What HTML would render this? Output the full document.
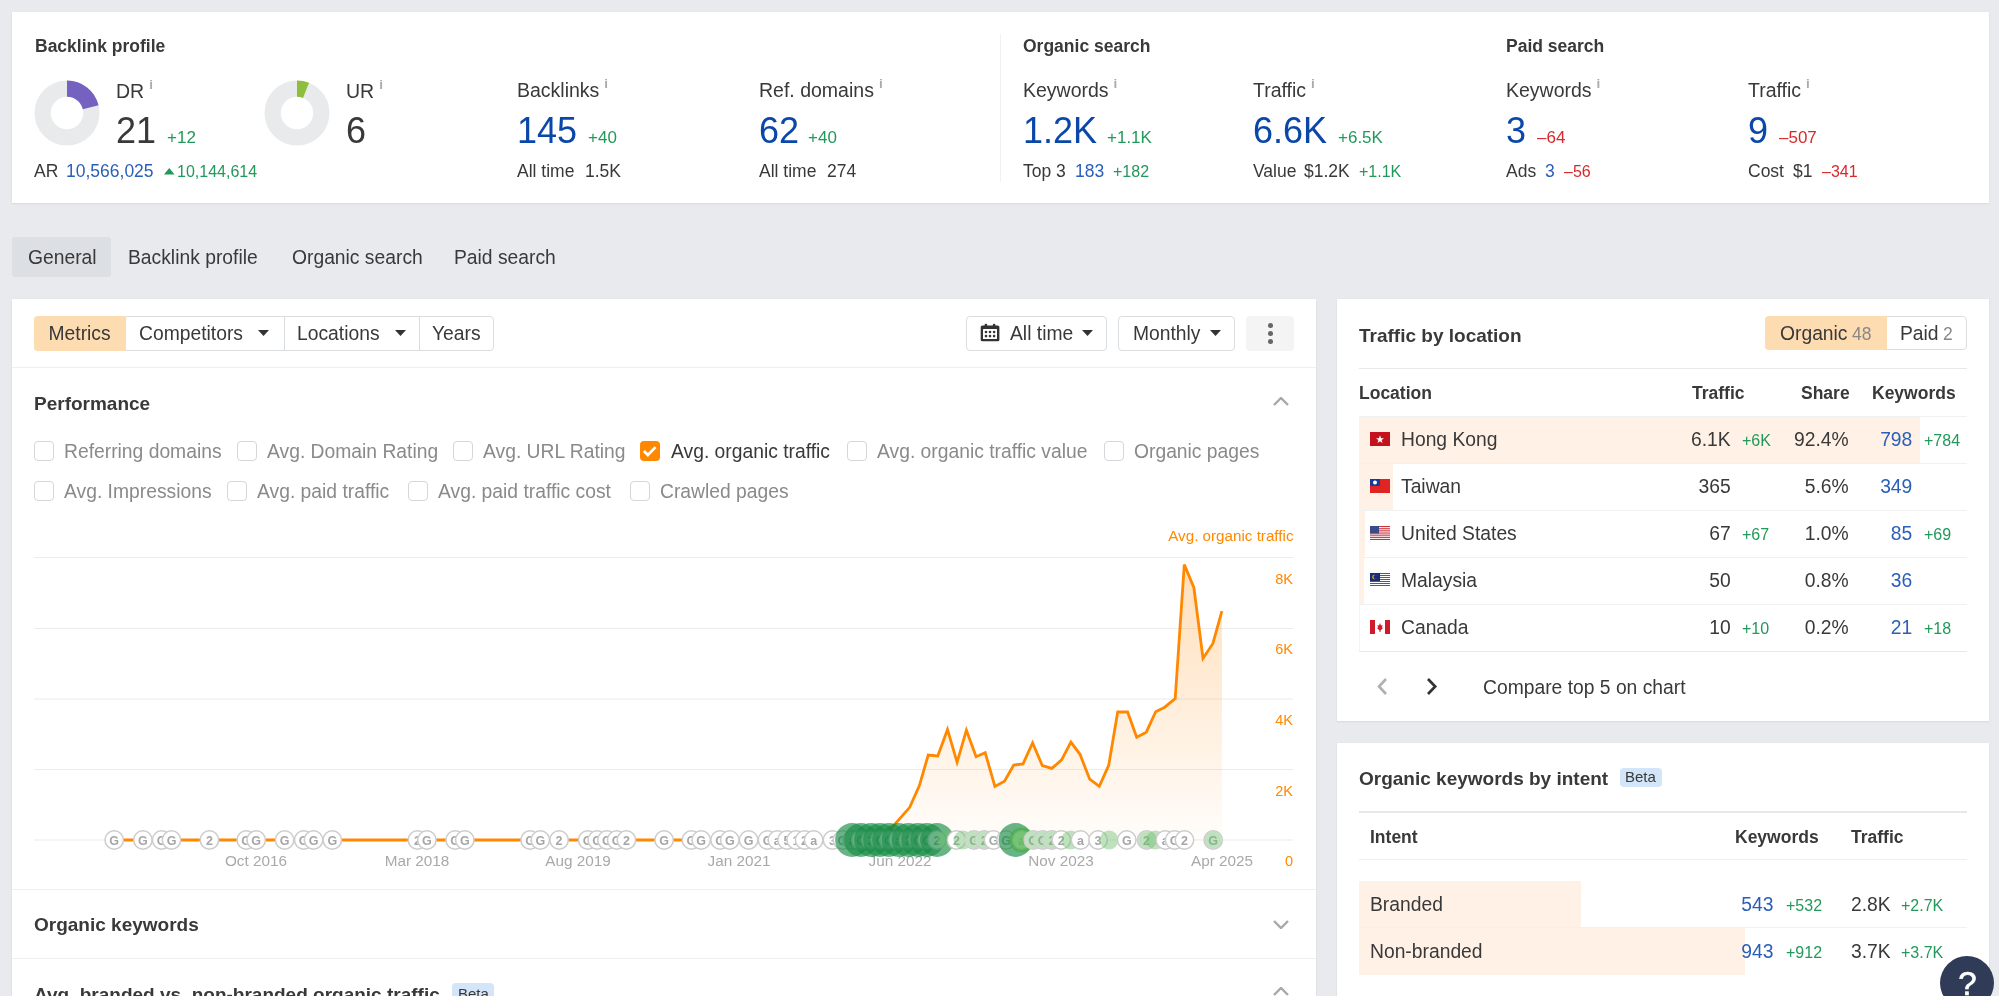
<!DOCTYPE html>
<html><head><meta charset="utf-8"><style>
html,body{margin:0;padding:0;}
body{width:1999px;height:996px;overflow:hidden;background:#e9eaed;position:relative;font-family:"Liberation Sans",sans-serif;}
.t{position:absolute;white-space:nowrap;line-height:normal;}
#w{position:absolute;left:0;top:0;width:1999px;height:996px;will-change:transform;}
</style></head><body><div id="w">
<div style="position:absolute;left:12px;top:12px;width:1977px;height:191px;background:#fff;box-shadow:0 1px 2px rgba(0,0,0,0.07),0 0 1px rgba(0,0,0,0.08);"></div>
<div style="position:absolute;left:1000px;top:34px;width:1px;height:148px;background:#f0f1f3;"></div>
<div class="t" style="left:35px;top:35.7px;font-size:17.5px;color:#393939;font-weight:bold;">Backlink profile</div>
<svg style="position:absolute;left:32.7px;top:79.2px" width="68" height="68" viewBox="32.7 79.2 68 68"><circle cx="66.7" cy="113.2" r="24.35" fill="none" stroke="#e9eaec" stroke-width="16.3"/><circle cx="66.7" cy="113.2" r="24.35" fill="none" stroke="#7461c0" stroke-width="16.3" stroke-dasharray="32.12906806826281 152.99556222982292" transform="rotate(-90 66.7 113.2)"/></svg>
<div class="t" style="left:116px;top:79.5px;font-size:19.5px;color:#393939;">DR</div>
<div class="t" style="left:149.1653125px;top:76.5px;font-size:13.5px;color:#ababab;font-weight:bold;">i</div>
<div class="t" style="left:116px;top:110px;font-size:36px;color:#393939;">21</div>
<div class="t" style="left:167px;top:128px;font-size:17px;color:#22985a;">+12</div>
<div class="t" style="left:34px;top:161px;font-size:17.5px;color:#393939;">AR</div>
<div class="t" style="left:66px;top:161px;font-size:17.5px;color:#2a5fb8;">10,566,025</div>
<svg style="position:absolute;left:163.5px;top:167.5px" width="11" height="7"><path d="M0 6.4 L5.25 0 L10.5 6.4Z" fill="#22985a"/></svg>
<div class="t" style="left:177px;top:163px;font-size:16px;color:#22985a;">10,144,614</div>
<svg style="position:absolute;left:263px;top:79.2px" width="68" height="68" viewBox="263 79.2 68 68"><circle cx="297" cy="113.2" r="24.35" fill="none" stroke="#e9eaec" stroke-width="16.3"/><circle cx="297" cy="113.2" r="24.35" fill="none" stroke="#8fbf3a" stroke-width="16.3" stroke-dasharray="9.179733733789375 152.99556222982292" transform="rotate(-90 297 113.2)"/></svg>
<div class="t" style="left:346px;top:79.5px;font-size:19.5px;color:#393939;">UR</div>
<div class="t" style="left:379.1653125px;top:76.5px;font-size:13.5px;color:#ababab;font-weight:bold;">i</div>
<div class="t" style="left:346px;top:110px;font-size:36px;color:#393939;">6</div>
<div class="t" style="left:517px;top:79.3px;font-size:19.5px;color:#393939;">Backlinks</div>
<div class="t" style="left:604.363125px;top:76.3px;font-size:13.5px;color:#ababab;font-weight:bold;">i</div>
<div class="t" style="left:517px;top:109.5px;font-size:36px;color:#0b47a8;">145</div>
<div class="t" style="left:588px;top:127.5px;font-size:17px;color:#22985a;">+40</div>
<div class="t" style="left:517px;top:161px;font-size:17.5px;color:#393939;">All time</div>
<div class="t" style="left:585px;top:161px;font-size:17.5px;color:#393939;">1.5K</div>
<div class="t" style="left:759px;top:79.3px;font-size:19.5px;color:#393939;">Ref. domains</div>
<div class="t" style="left:878.888515625px;top:76.3px;font-size:13.5px;color:#ababab;font-weight:bold;">i</div>
<div class="t" style="left:759px;top:109.5px;font-size:36px;color:#0b47a8;">62</div>
<div class="t" style="left:808px;top:127.5px;font-size:17px;color:#22985a;">+40</div>
<div class="t" style="left:759px;top:161px;font-size:17.5px;color:#393939;">All time</div>
<div class="t" style="left:827px;top:161px;font-size:17.5px;color:#393939;">274</div>
<div class="t" style="left:1023px;top:35.9px;font-size:17.5px;color:#393939;font-weight:bold;">Organic search</div>
<div class="t" style="left:1023px;top:79.3px;font-size:19.5px;color:#393939;">Keywords</div>
<div class="t" style="left:1113.620234375px;top:76.3px;font-size:13.5px;color:#ababab;font-weight:bold;">i</div>
<div class="t" style="left:1023px;top:109.5px;font-size:36px;color:#0b47a8;">1.2K</div>
<div class="t" style="left:1107px;top:127.5px;font-size:17px;color:#22985a;">+1.1K</div>
<div class="t" style="left:1023px;top:161px;font-size:17.5px;color:#393939;">Top 3</div>
<div class="t" style="left:1075px;top:161px;font-size:17.5px;color:#2a5fb8;">183</div>
<div class="t" style="left:1113px;top:163px;font-size:16px;color:#22985a;">+182</div>
<div class="t" style="left:1253px;top:79.3px;font-size:19.5px;color:#393939;">Traffic</div>
<div class="t" style="left:1311.0933203125px;top:76.3px;font-size:13.5px;color:#ababab;font-weight:bold;">i</div>
<div class="t" style="left:1253px;top:109.5px;font-size:36px;color:#0b47a8;">6.6K</div>
<div class="t" style="left:1338px;top:127.5px;font-size:17px;color:#22985a;">+6.5K</div>
<div class="t" style="left:1253px;top:161px;font-size:17.5px;color:#393939;">Value</div>
<div class="t" style="left:1304px;top:161px;font-size:17.5px;color:#393939;">$1.2K</div>
<div class="t" style="left:1359px;top:163px;font-size:16px;color:#22985a;">+1.1K</div>
<div class="t" style="left:1506px;top:35.9px;font-size:17.5px;color:#393939;font-weight:bold;">Paid search</div>
<div class="t" style="left:1506px;top:79.3px;font-size:19.5px;color:#393939;">Keywords</div>
<div class="t" style="left:1596.620234375px;top:76.3px;font-size:13.5px;color:#ababab;font-weight:bold;">i</div>
<div class="t" style="left:1506px;top:109.5px;font-size:36px;color:#0b47a8;">3</div>
<div class="t" style="left:1537px;top:127.5px;font-size:17px;color:#d8282c;">–64</div>
<div class="t" style="left:1506px;top:161px;font-size:17.5px;color:#393939;">Ads</div>
<div class="t" style="left:1545px;top:161px;font-size:17.5px;color:#2a5fb8;">3</div>
<div class="t" style="left:1564px;top:163px;font-size:16px;color:#d8282c;">–56</div>
<div class="t" style="left:1748px;top:79.3px;font-size:19.5px;color:#393939;">Traffic</div>
<div class="t" style="left:1806.0933203125px;top:76.3px;font-size:13.5px;color:#ababab;font-weight:bold;">i</div>
<div class="t" style="left:1748px;top:109.5px;font-size:36px;color:#0b47a8;">9</div>
<div class="t" style="left:1779px;top:127.5px;font-size:17px;color:#d8282c;">–507</div>
<div class="t" style="left:1748px;top:161px;font-size:17.5px;color:#393939;">Cost</div>
<div class="t" style="left:1793px;top:161px;font-size:17.5px;color:#393939;">$1</div>
<div class="t" style="left:1822px;top:163px;font-size:16px;color:#d8282c;">–341</div>
<div style="position:absolute;left:12px;top:237px;width:99px;height:40px;background:#dcdfe3;border-radius:3px;"></div>
<div class="t" style="left:28px;top:247px;font-size:19.3px;color:#393939;">General</div>
<div class="t" style="left:128px;top:247px;font-size:19.3px;color:#393939;">Backlink profile</div>
<div class="t" style="left:292px;top:247px;font-size:19.3px;color:#393939;">Organic search</div>
<div class="t" style="left:454px;top:247px;font-size:19.3px;color:#393939;">Paid search</div>
<div style="position:absolute;left:12px;top:299px;width:1304px;height:700px;background:#fff;box-shadow:0 1px 2px rgba(0,0,0,0.07),0 0 1px rgba(0,0,0,0.08);"></div>
<div style="position:absolute;left:34px;top:316px;width:460px;height:35px;box-sizing:border-box;border:1px solid #dadde0;border-radius:4px;"></div>
<div style="position:absolute;left:34px;top:316px;width:92px;height:35px;background:#fedcb2;border-radius:4px 0 0 4px;"></div>
<div style="position:absolute;left:283.5px;top:316px;width:1px;height:35px;background:#dadde0;"></div>
<div style="position:absolute;left:419px;top:316px;width:1px;height:35px;background:#dadde0;"></div>
<div class="t" style="left:48.5px;top:323px;font-size:19.3px;color:#393939;">Metrics</div>
<div class="t" style="left:139px;top:323px;font-size:19.3px;color:#393939;">Competitors</div>
<svg style="position:absolute;left:258px;top:330px" width="11" height="6"><path d="M0 0 L11 0 L5.5 6Z" fill="#333"/></svg>
<div class="t" style="left:297px;top:323px;font-size:19.3px;color:#393939;">Locations</div>
<svg style="position:absolute;left:394.5px;top:330px" width="11" height="6"><path d="M0 0 L11 0 L5.5 6Z" fill="#333"/></svg>
<div class="t" style="left:432px;top:323px;font-size:19.3px;color:#393939;">Years</div>
<div style="position:absolute;left:966px;top:316px;width:141px;height:35px;box-sizing:border-box;border:1px solid #dadde0;border-radius:4px;"></div>
<svg style="position:absolute;left:980px;top:323px" width="20" height="20" viewBox="0 0 20 20"><rect x="0.7" y="2.4" width="18.7" height="15.9" rx="1.6" fill="#333"/><rect x="4.6" y="0.8" width="2.6" height="3.5" rx="1.2" fill="#333"/><rect x="12.8" y="0.8" width="2.6" height="3.5" rx="1.2" fill="#333"/><rect x="3" y="6.1" width="14" height="10" rx="0.5" fill="#fff"/><g fill="#333"><circle cx="6" cy="9" r="1.3"/><circle cx="10" cy="9" r="1.3"/><circle cx="14.1" cy="9" r="1.3"/><circle cx="6" cy="13.1" r="1.3"/><circle cx="10" cy="13.1" r="1.3"/><circle cx="14.1" cy="13.1" r="1.3"/></g></svg>
<div class="t" style="left:1010px;top:323px;font-size:19.3px;color:#393939;">All time</div>
<svg style="position:absolute;left:1082px;top:330px" width="11" height="6"><path d="M0 0 L11 0 L5.5 6Z" fill="#333"/></svg>
<div style="position:absolute;left:1118px;top:316px;width:117px;height:35px;box-sizing:border-box;border:1px solid #dadde0;border-radius:4px;"></div>
<div class="t" style="left:1133px;top:323px;font-size:19.3px;color:#393939;">Monthly</div>
<svg style="position:absolute;left:1209.5px;top:330px" width="11" height="6"><path d="M0 0 L11 0 L5.5 6Z" fill="#333"/></svg>
<div style="position:absolute;left:1246px;top:316px;width:48px;height:35px;background:#f4f4f5;border-radius:4px;"></div>
<div style="position:absolute;left:1267.5px;top:322.5px;width:5px;height:5px;background:#666;border-radius:50%;"></div>
<div style="position:absolute;left:1267.5px;top:330.5px;width:5px;height:5px;background:#666;border-radius:50%;"></div>
<div style="position:absolute;left:1267.5px;top:338.5px;width:5px;height:5px;background:#666;border-radius:50%;"></div>
<div style="position:absolute;left:12px;top:367px;width:1304px;height:1px;background:#eceef0;"></div>
<div class="t" style="left:34px;top:393.3px;font-size:19px;color:#393939;font-weight:bold;">Performance</div>
<svg style="position:absolute;left:1273.3px;top:396.7px" width="16" height="9"><path d="M1 8 L8 1 L15 8" fill="none" stroke="#a8a8a8" stroke-width="2.4"/></svg>
<div style="position:absolute;left:34px;top:441px;width:20px;height:20px;box-sizing:border-box;border:1px solid #d4d6d9;border-radius:4px;"></div>
<div class="t" style="left:64px;top:441px;font-size:19.3px;color:#8a8a8a;">Referring domains</div>
<div style="position:absolute;left:237px;top:441px;width:20px;height:20px;box-sizing:border-box;border:1px solid #d4d6d9;border-radius:4px;"></div>
<div class="t" style="left:267px;top:441px;font-size:19.3px;color:#8a8a8a;">Avg. Domain Rating</div>
<div style="position:absolute;left:453px;top:441px;width:20px;height:20px;box-sizing:border-box;border:1px solid #d4d6d9;border-radius:4px;"></div>
<div class="t" style="left:483px;top:441px;font-size:19.3px;color:#8a8a8a;">Avg. URL Rating</div>
<svg style="position:absolute;left:640px;top:441px" width="20" height="20"><rect x="0" y="0" width="20" height="20" rx="4" fill="#ff8800"/><path d="M3.9 10 L7.9 14 L15.6 6.1" fill="none" stroke="#fff" stroke-width="2.7"/></svg>
<div class="t" style="left:671px;top:441px;font-size:19.3px;color:#393939;">Avg. organic traffic</div>
<div style="position:absolute;left:847px;top:441px;width:20px;height:20px;box-sizing:border-box;border:1px solid #d4d6d9;border-radius:4px;"></div>
<div class="t" style="left:877px;top:441px;font-size:19.3px;color:#8a8a8a;">Avg. organic traffic value</div>
<div style="position:absolute;left:1104px;top:441px;width:20px;height:20px;box-sizing:border-box;border:1px solid #d4d6d9;border-radius:4px;"></div>
<div class="t" style="left:1134px;top:441px;font-size:19.3px;color:#8a8a8a;">Organic pages</div>
<div style="position:absolute;left:34px;top:480.5px;width:20px;height:20px;box-sizing:border-box;border:1px solid #d4d6d9;border-radius:4px;"></div>
<div class="t" style="left:64px;top:480.5px;font-size:19.3px;color:#8a8a8a;">Avg. Impressions</div>
<div style="position:absolute;left:227px;top:480.5px;width:20px;height:20px;box-sizing:border-box;border:1px solid #d4d6d9;border-radius:4px;"></div>
<div class="t" style="left:257px;top:480.5px;font-size:19.3px;color:#8a8a8a;">Avg. paid traffic</div>
<div style="position:absolute;left:408px;top:480.5px;width:20px;height:20px;box-sizing:border-box;border:1px solid #d4d6d9;border-radius:4px;"></div>
<div class="t" style="left:438px;top:480.5px;font-size:19.3px;color:#8a8a8a;">Avg. paid traffic cost</div>
<div style="position:absolute;left:630px;top:480.5px;width:20px;height:20px;box-sizing:border-box;border:1px solid #d4d6d9;border-radius:4px;"></div>
<div class="t" style="left:660px;top:480.5px;font-size:19.3px;color:#8a8a8a;">Crawled pages</div>
<svg style="position:absolute;left:0;top:0" width="1999" height="996" viewBox="0 0 1999 996">
<defs><linearGradient id="fg" x1="0" y1="0" x2="0" y2="1"><stop offset="0" stop-color="#ff8800" stop-opacity="0.27"/><stop offset="1" stop-color="#ff8800" stop-opacity="0.02"/></linearGradient></defs>
<line x1="34" y1="557.5" x2="1293" y2="557.5" stroke="#ececec" stroke-width="1.2"/>
<line x1="34" y1="628.5" x2="1293" y2="628.5" stroke="#ececec" stroke-width="1.2"/>
<line x1="34" y1="699" x2="1293" y2="699" stroke="#ececec" stroke-width="1.2"/>
<line x1="34" y1="769.5" x2="1293" y2="769.5" stroke="#ececec" stroke-width="1.2"/>
<line x1="34" y1="840" x2="1293" y2="840" stroke="#ececec" stroke-width="1.2"/>
<path d="M881,840 L881,840 L909.7,807.3 L919.4,785.6 L928.2,755.1 L937.8,755.9 L947.5,729.4 L957.1,762.3 L966.4,730.2 L976.1,756.7 L985.2,752.7 L994.9,786.4 L1004.5,781.3 L1013.7,765 L1023,763.9 L1032.6,743 L1042.3,765.5 L1051.9,768.4 L1061.6,759.9 L1070.9,742.2 L1080,754.3 L1089.7,779.2 L1099.3,786.4 L1108.7,765.4 L1117.7,712 L1127.6,712 L1136.7,737.3 L1146.3,732.2 L1155.7,711.7 L1164.7,707.2 L1175.2,698.5 L1184.3,564.5 L1193.9,587.7 L1203,658.4 L1212.9,643.4 L1221.9,611.1 L1222,840 Z" fill="url(#fg)"/>
<polyline points="114,840 881,840 909.7,807.3 919.4,785.6 928.2,755.1 937.8,755.9 947.5,729.4 957.1,762.3 966.4,730.2 976.1,756.7 985.2,752.7 994.9,786.4 1004.5,781.3 1013.7,765 1023,763.9 1032.6,743 1042.3,765.5 1051.9,768.4 1061.6,759.9 1070.9,742.2 1080,754.3 1089.7,779.2 1099.3,786.4 1108.7,765.4 1117.7,712 1127.6,712 1136.7,737.3 1146.3,732.2 1155.7,711.7 1164.7,707.2 1175.2,698.5 1184.3,564.5 1193.9,587.7 1203,658.4 1212.9,643.4 1221.9,611.1" fill="none" stroke="#ff8800" stroke-width="2.8" stroke-linejoin="miter"/>
</svg>
<svg style="position:absolute;left:0;top:0" width="1999" height="996" viewBox="0 0 1999 996" font-family="Liberation Sans, sans-serif">
<text x="256" y="866" font-size="15.3" text-anchor="middle" fill="#a9a9a9">Oct 2016</text>
<text x="417" y="866" font-size="15.3" text-anchor="middle" fill="#a9a9a9">Mar 2018</text>
<text x="578" y="866" font-size="15.3" text-anchor="middle" fill="#a9a9a9">Aug 2019</text>
<text x="739" y="866" font-size="15.3" text-anchor="middle" fill="#a9a9a9">Jan 2021</text>
<text x="900" y="866" font-size="15.3" text-anchor="middle" fill="#a9a9a9">Jun 2022</text>
<text x="1061" y="866" font-size="15.3" text-anchor="middle" fill="#a9a9a9">Nov 2023</text>
<text x="1222" y="866" font-size="15.3" text-anchor="middle" fill="#a9a9a9">Apr 2025</text>
<circle cx="114.2" cy="840" r="9.2" fill="#fff" stroke="#cccccc" stroke-width="1.5"/><text x="114.2" y="844.5" font-size="12.5" font-weight="bold" text-anchor="middle" fill="#a6a6a6">G</text>
<circle cx="142.9" cy="840" r="9.2" fill="#fff" stroke="#cccccc" stroke-width="1.5"/><text x="142.9" y="844.5" font-size="12.5" font-weight="bold" text-anchor="middle" fill="#a6a6a6">G</text>
<circle cx="161.6" cy="840" r="9.2" fill="#fff" stroke="#cccccc" stroke-width="1.5"/><text x="161.6" y="844.5" font-size="12.5" font-weight="bold" text-anchor="middle" fill="#a6a6a6">G</text>
<circle cx="171.5" cy="840" r="9.2" fill="#fff" stroke="#cccccc" stroke-width="1.5"/><text x="171.5" y="844.5" font-size="12.5" font-weight="bold" text-anchor="middle" fill="#a6a6a6">G</text>
<circle cx="209.4" cy="840" r="9.2" fill="#fff" stroke="#cccccc" stroke-width="1.5"/><text x="209.4" y="844.5" font-size="12.5" font-weight="bold" text-anchor="middle" fill="#a6a6a6">2</text>
<circle cx="246.2" cy="840" r="9.2" fill="#fff" stroke="#cccccc" stroke-width="1.5"/><text x="246.2" y="844.5" font-size="12.5" font-weight="bold" text-anchor="middle" fill="#a6a6a6">G</text>
<circle cx="256.2" cy="840" r="9.2" fill="#fff" stroke="#cccccc" stroke-width="1.5"/><text x="256.2" y="844.5" font-size="12.5" font-weight="bold" text-anchor="middle" fill="#a6a6a6">G</text>
<circle cx="284.6" cy="840" r="9.2" fill="#fff" stroke="#cccccc" stroke-width="1.5"/><text x="284.6" y="844.5" font-size="12.5" font-weight="bold" text-anchor="middle" fill="#a6a6a6">G</text>
<circle cx="303.7" cy="840" r="9.2" fill="#fff" stroke="#cccccc" stroke-width="1.5"/><text x="303.7" y="844.5" font-size="12.5" font-weight="bold" text-anchor="middle" fill="#a6a6a6">G</text>
<circle cx="313.5" cy="840" r="9.2" fill="#fff" stroke="#cccccc" stroke-width="1.5"/><text x="313.5" y="844.5" font-size="12.5" font-weight="bold" text-anchor="middle" fill="#a6a6a6">G</text>
<circle cx="332.3" cy="840" r="9.2" fill="#fff" stroke="#cccccc" stroke-width="1.5"/><text x="332.3" y="844.5" font-size="12.5" font-weight="bold" text-anchor="middle" fill="#a6a6a6">G</text>
<circle cx="417.4" cy="840" r="9.2" fill="#fff" stroke="#cccccc" stroke-width="1.5"/><text x="417.4" y="844.5" font-size="12.5" font-weight="bold" text-anchor="middle" fill="#a6a6a6">2</text>
<circle cx="426.9" cy="840" r="9.2" fill="#fff" stroke="#cccccc" stroke-width="1.5"/><text x="426.9" y="844.5" font-size="12.5" font-weight="bold" text-anchor="middle" fill="#a6a6a6">G</text>
<circle cx="455.1" cy="840" r="9.2" fill="#fff" stroke="#cccccc" stroke-width="1.5"/><text x="455.1" y="844.5" font-size="12.5" font-weight="bold" text-anchor="middle" fill="#a6a6a6">G</text>
<circle cx="464.8" cy="840" r="9.2" fill="#fff" stroke="#cccccc" stroke-width="1.5"/><text x="464.8" y="844.5" font-size="12.5" font-weight="bold" text-anchor="middle" fill="#a6a6a6">G</text>
<circle cx="530.1" cy="840" r="9.2" fill="#fff" stroke="#cccccc" stroke-width="1.5"/><text x="530.1" y="844.5" font-size="12.5" font-weight="bold" text-anchor="middle" fill="#a6a6a6">G</text>
<circle cx="540.3" cy="840" r="9.2" fill="#fff" stroke="#cccccc" stroke-width="1.5"/><text x="540.3" y="844.5" font-size="12.5" font-weight="bold" text-anchor="middle" fill="#a6a6a6">G</text>
<circle cx="559.1" cy="840" r="9.2" fill="#fff" stroke="#cccccc" stroke-width="1.5"/><text x="559.1" y="844.5" font-size="12.5" font-weight="bold" text-anchor="middle" fill="#a6a6a6">2</text>
<circle cx="587.7" cy="840" r="9.2" fill="#fff" stroke="#cccccc" stroke-width="1.5"/><text x="587.7" y="844.5" font-size="12.5" font-weight="bold" text-anchor="middle" fill="#a6a6a6">G</text>
<circle cx="597.2" cy="840" r="9.2" fill="#fff" stroke="#cccccc" stroke-width="1.5"/><text x="597.2" y="844.5" font-size="12.5" font-weight="bold" text-anchor="middle" fill="#a6a6a6">G</text>
<circle cx="606.9" cy="840" r="9.2" fill="#fff" stroke="#cccccc" stroke-width="1.5"/><text x="606.9" y="844.5" font-size="12.5" font-weight="bold" text-anchor="middle" fill="#a6a6a6">G</text>
<circle cx="616.7" cy="840" r="9.2" fill="#fff" stroke="#cccccc" stroke-width="1.5"/><text x="616.7" y="844.5" font-size="12.5" font-weight="bold" text-anchor="middle" fill="#a6a6a6">G</text>
<circle cx="626.4" cy="840" r="9.2" fill="#fff" stroke="#cccccc" stroke-width="1.5"/><text x="626.4" y="844.5" font-size="12.5" font-weight="bold" text-anchor="middle" fill="#a6a6a6">2</text>
<circle cx="664.1" cy="840" r="9.2" fill="#fff" stroke="#cccccc" stroke-width="1.5"/><text x="664.1" y="844.5" font-size="12.5" font-weight="bold" text-anchor="middle" fill="#a6a6a6">G</text>
<circle cx="691.4" cy="840" r="9.2" fill="#fff" stroke="#cccccc" stroke-width="1.5"/><text x="691.4" y="844.5" font-size="12.5" font-weight="bold" text-anchor="middle" fill="#a6a6a6">G</text>
<circle cx="701.2" cy="840" r="9.2" fill="#fff" stroke="#cccccc" stroke-width="1.5"/><text x="701.2" y="844.5" font-size="12.5" font-weight="bold" text-anchor="middle" fill="#a6a6a6">G</text>
<circle cx="720" cy="840" r="9.2" fill="#fff" stroke="#cccccc" stroke-width="1.5"/><text x="720" y="844.5" font-size="12.5" font-weight="bold" text-anchor="middle" fill="#a6a6a6">G</text>
<circle cx="729.8" cy="840" r="9.2" fill="#fff" stroke="#cccccc" stroke-width="1.5"/><text x="729.8" y="844.5" font-size="12.5" font-weight="bold" text-anchor="middle" fill="#a6a6a6">G</text>
<circle cx="748.6" cy="840" r="9.2" fill="#fff" stroke="#cccccc" stroke-width="1.5"/><text x="748.6" y="844.5" font-size="12.5" font-weight="bold" text-anchor="middle" fill="#a6a6a6">G</text>
<circle cx="767.5" cy="840" r="9.2" fill="#fff" stroke="#cccccc" stroke-width="1.5"/><text x="767.5" y="844.5" font-size="12.5" font-weight="bold" text-anchor="middle" fill="#a6a6a6">G</text>
<circle cx="777.3" cy="840" r="9.2" fill="#fff" stroke="#cccccc" stroke-width="1.5"/><text x="777.3" y="844.5" font-size="12.5" font-weight="bold" text-anchor="middle" fill="#a6a6a6">a</text>
<circle cx="787" cy="840" r="9.2" fill="#fff" stroke="#cccccc" stroke-width="1.5"/><text x="787" y="844.5" font-size="12.5" font-weight="bold" text-anchor="middle" fill="#a6a6a6">5</text>
<circle cx="796.1" cy="840" r="9.2" fill="#fff" stroke="#cccccc" stroke-width="1.5"/><text x="796.1" y="844.5" font-size="12.5" font-weight="bold" text-anchor="middle" fill="#a6a6a6">1</text>
<circle cx="804.6" cy="840" r="9.2" fill="#fff" stroke="#cccccc" stroke-width="1.5"/><text x="804.6" y="844.5" font-size="12.5" font-weight="bold" text-anchor="middle" fill="#a6a6a6">2</text>
<circle cx="813.7" cy="840" r="9.2" fill="#fff" stroke="#cccccc" stroke-width="1.5"/><text x="813.7" y="844.5" font-size="12.5" font-weight="bold" text-anchor="middle" fill="#a6a6a6">a</text>
<circle cx="832.5" cy="840" r="9.2" fill="#fff" stroke="#cccccc" stroke-width="1.5"/><text x="832.5" y="844.5" font-size="12.5" font-weight="bold" text-anchor="middle" fill="#a6a6a6">3</text>
<circle cx="842.4" cy="840" r="9.2" fill="#fff" stroke="#cccccc" stroke-width="1.5"/><text x="842.4" y="844.5" font-size="12.5" font-weight="bold" text-anchor="middle" fill="#a6a6a6">G</text>
<circle cx="852" cy="840" r="9.2" fill="#fff" stroke="#cccccc" stroke-width="1.5"/><text x="852" y="844.5" font-size="12.5" font-weight="bold" text-anchor="middle" fill="#a6a6a6">a</text>
<circle cx="852" cy="840" r="16.9" fill="rgb(20,138,68)" fill-opacity="0.64"/>
<circle cx="861" cy="840" r="9.2" fill="#fff" stroke="#cccccc" stroke-width="1.5"/><text x="861" y="844.5" font-size="12.5" font-weight="bold" text-anchor="middle" fill="#a6a6a6">G</text>
<circle cx="861" cy="840" r="16.9" fill="rgb(20,138,68)" fill-opacity="0.64"/>
<circle cx="871" cy="840" r="9.2" fill="#fff" stroke="#cccccc" stroke-width="1.5"/><text x="871" y="844.5" font-size="12.5" font-weight="bold" text-anchor="middle" fill="#a6a6a6">2</text>
<circle cx="871" cy="840" r="16.9" fill="rgb(20,138,68)" fill-opacity="0.64"/>
<circle cx="880" cy="840" r="9.2" fill="#fff" stroke="#cccccc" stroke-width="1.5"/><text x="880" y="844.5" font-size="12.5" font-weight="bold" text-anchor="middle" fill="#a6a6a6">G</text>
<circle cx="880" cy="840" r="16.9" fill="rgb(20,138,68)" fill-opacity="0.64"/>
<circle cx="889" cy="840" r="9.2" fill="#fff" stroke="#cccccc" stroke-width="1.5"/><text x="889" y="844.5" font-size="12.5" font-weight="bold" text-anchor="middle" fill="#a6a6a6">G</text>
<circle cx="889" cy="840" r="16.9" fill="rgb(20,138,68)" fill-opacity="0.64"/>
<circle cx="898.5" cy="840" r="9.2" fill="#fff" stroke="#cccccc" stroke-width="1.5"/><text x="898.5" y="844.5" font-size="12.5" font-weight="bold" text-anchor="middle" fill="#a6a6a6">a</text>
<circle cx="898.5" cy="840" r="16.9" fill="rgb(20,138,68)" fill-opacity="0.64"/>
<circle cx="908.5" cy="840" r="9.2" fill="#fff" stroke="#cccccc" stroke-width="1.5"/><text x="908.5" y="844.5" font-size="12.5" font-weight="bold" text-anchor="middle" fill="#a6a6a6">2</text>
<circle cx="908.5" cy="840" r="16.9" fill="rgb(20,138,68)" fill-opacity="0.64"/>
<circle cx="918" cy="840" r="9.2" fill="#fff" stroke="#cccccc" stroke-width="1.5"/><text x="918" y="844.5" font-size="12.5" font-weight="bold" text-anchor="middle" fill="#a6a6a6">G</text>
<circle cx="918" cy="840" r="16.9" fill="rgb(20,138,68)" fill-opacity="0.64"/>
<circle cx="927" cy="840" r="9.2" fill="#fff" stroke="#cccccc" stroke-width="1.5"/><text x="927" y="844.5" font-size="12.5" font-weight="bold" text-anchor="middle" fill="#a6a6a6">G</text>
<circle cx="927" cy="840" r="16.9" fill="rgb(20,138,68)" fill-opacity="0.64"/>
<circle cx="937" cy="840" r="9.2" fill="#fff" stroke="#cccccc" stroke-width="1.5"/><text x="937" y="844.5" font-size="12.5" font-weight="bold" text-anchor="middle" fill="#a6a6a6">2</text>
<circle cx="937" cy="840" r="16.9" fill="rgb(20,138,68)" fill-opacity="0.64"/>
<circle cx="946.6" cy="840" r="9.4" fill="rgb(110,190,110)" fill-opacity="0.45"/>
<circle cx="956.5" cy="840" r="9.2" fill="#fff" stroke="#cccccc" stroke-width="1.5"/><text x="956.5" y="844.5" font-size="12.5" font-weight="bold" text-anchor="middle" fill="#a6a6a6">2</text>
<circle cx="963" cy="840" r="9.4" fill="rgb(110,190,110)" fill-opacity="0.45"/>
<circle cx="974" cy="840" r="9.2" fill="#fff" stroke="#cccccc" stroke-width="1.5"/><text x="974" y="844.5" font-size="12.5" font-weight="bold" text-anchor="middle" fill="#a6a6a6">G</text>
<circle cx="974" cy="840" r="8.4" fill="rgb(110,190,110)" fill-opacity="0.45"/>
<circle cx="984.3" cy="840" r="9.2" fill="#fff" stroke="#cccccc" stroke-width="1.5"/><text x="984.3" y="844.5" font-size="12.5" font-weight="bold" text-anchor="middle" fill="#a6a6a6">2</text>
<circle cx="984.3" cy="840" r="8.4" fill="rgb(110,190,110)" fill-opacity="0.45"/>
<circle cx="993.5" cy="840" r="9.2" fill="#fff" stroke="#cccccc" stroke-width="1.5"/><text x="993.5" y="844.5" font-size="12.5" font-weight="bold" text-anchor="middle" fill="#a6a6a6">G</text>
<circle cx="1006" cy="840" r="9.2" fill="#fff" stroke="#cccccc" stroke-width="1.5"/><text x="1006" y="844.5" font-size="12.5" font-weight="bold" text-anchor="middle" fill="#a6a6a6">G</text>
<circle cx="1015.5" cy="840" r="16.9" fill="rgb(20,138,68)" fill-opacity="0.64"/>
<circle cx="1021.8" cy="840" r="9.2" fill="#fff" stroke="#cccccc" stroke-width="1.5"/><text x="1021.8" y="844.5" font-size="12.5" font-weight="bold" text-anchor="middle" fill="#a6a6a6">a</text>
<circle cx="1021.8" cy="840" r="12.6" fill="rgb(70,175,70)" fill-opacity="0.7"/>
<circle cx="1021.8" cy="840" r="8.4" fill="rgb(110,190,110)" fill-opacity="0.45"/>
<circle cx="1033.2" cy="840" r="9.2" fill="#fff" stroke="#cccccc" stroke-width="1.5"/><text x="1033.2" y="844.5" font-size="12.5" font-weight="bold" text-anchor="middle" fill="#a6a6a6">G</text>
<circle cx="1033.2" cy="840" r="8.4" fill="rgb(110,190,110)" fill-opacity="0.45"/>
<circle cx="1042.6" cy="840" r="9.2" fill="#fff" stroke="#cccccc" stroke-width="1.5"/><text x="1042.6" y="844.5" font-size="12.5" font-weight="bold" text-anchor="middle" fill="#a6a6a6">G</text>
<circle cx="1042.6" cy="840" r="8.4" fill="rgb(110,190,110)" fill-opacity="0.45"/>
<circle cx="1051.9" cy="840" r="9.2" fill="#fff" stroke="#cccccc" stroke-width="1.5"/><text x="1051.9" y="844.5" font-size="12.5" font-weight="bold" text-anchor="middle" fill="#a6a6a6">2</text>
<circle cx="1051.9" cy="840" r="8.4" fill="rgb(110,190,110)" fill-opacity="0.45"/>
<circle cx="1061.3" cy="840" r="9.2" fill="#fff" stroke="#cccccc" stroke-width="1.5"/><text x="1061.3" y="844.5" font-size="12.5" font-weight="bold" text-anchor="middle" fill="#a6a6a6">2</text>
<circle cx="1070.6" cy="840" r="9.4" fill="rgb(110,190,110)" fill-opacity="0.45"/>
<circle cx="1080.5" cy="840" r="9.2" fill="#fff" stroke="#cccccc" stroke-width="1.5"/><text x="1080.5" y="844.5" font-size="12.5" font-weight="bold" text-anchor="middle" fill="#a6a6a6">a</text>
<circle cx="1098.1" cy="840" r="9.2" fill="#fff" stroke="#cccccc" stroke-width="1.5"/><text x="1098.1" y="844.5" font-size="12.5" font-weight="bold" text-anchor="middle" fill="#a6a6a6">3</text>
<circle cx="1109.1" cy="840" r="9.4" fill="rgb(110,190,110)" fill-opacity="0.45"/>
<circle cx="1126.8" cy="840" r="9.2" fill="#fff" stroke="#cccccc" stroke-width="1.5"/><text x="1126.8" y="844.5" font-size="12.5" font-weight="bold" text-anchor="middle" fill="#a6a6a6">G</text>
<circle cx="1146.6" cy="840" r="9.2" fill="#fff" stroke="#cccccc" stroke-width="1.5"/><text x="1146.6" y="844.5" font-size="12.5" font-weight="bold" text-anchor="middle" fill="#a6a6a6">2</text>
<circle cx="1146.6" cy="840" r="8.4" fill="rgb(110,190,110)" fill-opacity="0.45"/>
<circle cx="1155.4" cy="840" r="9.4" fill="rgb(110,190,110)" fill-opacity="0.45"/>
<circle cx="1165.3" cy="840" r="9.2" fill="#fff" stroke="#cccccc" stroke-width="1.5"/><text x="1165.3" y="844.5" font-size="12.5" font-weight="bold" text-anchor="middle" fill="#a6a6a6">a</text>
<circle cx="1174.6" cy="840" r="9.2" fill="#fff" stroke="#cccccc" stroke-width="1.5"/><text x="1174.6" y="844.5" font-size="12.5" font-weight="bold" text-anchor="middle" fill="#a6a6a6">G</text>
<circle cx="1184.5" cy="840" r="9.2" fill="#fff" stroke="#cccccc" stroke-width="1.5"/><text x="1184.5" y="844.5" font-size="12.5" font-weight="bold" text-anchor="middle" fill="#a6a6a6">2</text>
<circle cx="1213.2" cy="840" r="9.2" fill="#fff" stroke="#cccccc" stroke-width="1.5"/><text x="1213.2" y="844.5" font-size="12.5" font-weight="bold" text-anchor="middle" fill="#a6a6a6">G</text>
<circle cx="1213.2" cy="840" r="8.4" fill="rgb(110,190,110)" fill-opacity="0.45"/>
</svg>
<div class="t" style="right:705.5px;top:526.5px;font-size:15.2px;color:#ff8800;">Avg. organic traffic</div>
<div class="t" style="right:706px;top:571.0px;font-size:14.5px;color:#ff8800;">8K</div>
<div class="t" style="right:706px;top:641.3px;font-size:14.5px;color:#ff8800;">6K</div>
<div class="t" style="right:706px;top:712.0px;font-size:14.5px;color:#ff8800;">4K</div>
<div class="t" style="right:706px;top:782.5999999999999px;font-size:14.5px;color:#ff8800;">2K</div>
<div class="t" style="right:706px;top:853.3px;font-size:14.5px;color:#ff8800;">0</div>
<div style="position:absolute;left:12px;top:889px;width:1304px;height:1px;background:#eceef0;"></div>
<div class="t" style="left:34px;top:914.2px;font-size:19px;color:#393939;font-weight:bold;">Organic keywords</div>
<svg style="position:absolute;left:1273px;top:919.5px" width="16" height="9"><path d="M1 1 L8 8 L15 1" fill="none" stroke="#a8a8a8" stroke-width="2.4"/></svg>
<div style="position:absolute;left:12px;top:958px;width:1304px;height:1px;background:#eceef0;"></div>
<div class="t" style="left:34px;top:983.5px;font-size:19px;color:#393939;font-weight:bold;">Avg. branded vs. non-branded organic traffic</div>
<div style="position:absolute;left:452px;top:983px;width:42px;height:19.3px;background:#d3e5f8;border-radius:4px;"></div>
<div class="t" style="left:458px;top:985px;font-size:15px;color:#393939;">Beta</div>
<svg style="position:absolute;left:1273px;top:986.5px" width="16" height="9"><path d="M1 8 L8 1 L15 8" fill="none" stroke="#a8a8a8" stroke-width="2.4"/></svg>
<div style="position:absolute;left:1337px;top:299px;width:652px;height:422px;background:#fff;box-shadow:0 1px 2px rgba(0,0,0,0.07),0 0 1px rgba(0,0,0,0.08);"></div>
<div class="t" style="left:1359px;top:324.9px;font-size:19px;color:#393939;font-weight:bold;">Traffic by location</div>
<div style="position:absolute;left:1765px;top:316px;width:202px;height:34px;box-sizing:border-box;border:1px solid #dadde0;border-radius:4px;"></div>
<div style="position:absolute;left:1765px;top:316px;width:121.5px;height:34px;background:#fedcb2;border-radius:4px 0 0 4px;"></div>
<div class="t" style="left:1780px;top:323px;font-size:19.3px;color:#393939;">Organic</div>
<div class="t" style="left:1852px;top:324px;font-size:17.5px;color:#888;">48</div>
<div class="t" style="left:1900px;top:323px;font-size:19.3px;color:#393939;">Paid</div>
<div class="t" style="left:1943px;top:324px;font-size:17.5px;color:#888;">2</div>
<div style="position:absolute;left:1359px;top:368px;width:608px;height:1px;background:#e6e8ea;"></div>
<div class="t" style="left:1359px;top:382.8px;font-size:17.5px;color:#393939;font-weight:bold;">Location</div>
<div class="t" style="left:1692px;top:382.8px;font-size:17.5px;color:#393939;font-weight:bold;">Traffic</div>
<div class="t" style="left:1801px;top:382.8px;font-size:17.5px;color:#393939;font-weight:bold;">Share</div>
<div class="t" style="left:1872px;top:382.8px;font-size:17.5px;color:#393939;font-weight:bold;">Keywords</div>
<div style="position:absolute;left:1359px;top:415.5px;width:560.9px;height:47px;background:#fff1e6;"></div>
<div style="position:absolute;left:1359px;top:415.5px;width:608px;height:1px;background:#f0f1f3;"></div>
<svg style="position:absolute;left:1370px;top:432.0px" width="20" height="14"><rect width="20" height="14" fill="#c4121c"/><path d="M10 3.2 L11 6.2 L14 6.3 L11.6 8.1 L12.5 11 L10 9.3 L7.5 11 L8.4 8.1 L6 6.3 L9 6.2Z" fill="#fff"/></svg>
<div class="t" style="left:1401px;top:429.0px;font-size:19.3px;color:#393939;">Hong Kong</div>
<div class="t" style="right:268.4000000000001px;top:429.0px;font-size:19.3px;color:#393939;">6.1K</div>
<div class="t" style="left:1742px;top:431.5px;font-size:16px;color:#22985a;">+6K</div>
<div class="t" style="right:150.29999999999995px;top:429.0px;font-size:19.3px;color:#393939;">92.4%</div>
<div class="t" style="right:86.70000000000005px;top:429.0px;font-size:19.3px;color:#2a5fb8;">798</div>
<div class="t" style="left:1924px;top:431.5px;font-size:16px;color:#22985a;">+784</div>
<div style="position:absolute;left:1359px;top:462.5px;width:34.0px;height:47px;background:#fff1e6;"></div>
<div style="position:absolute;left:1359px;top:462.5px;width:608px;height:1px;background:#f0f1f3;"></div>
<svg style="position:absolute;left:1370px;top:479.0px" width="20" height="14"><rect width="20" height="14" fill="#e02424"/><rect width="10" height="7" fill="#1a3a9a"/><circle cx="5" cy="3.5" r="2" fill="#fff"/></svg>
<div class="t" style="left:1401px;top:476.0px;font-size:19.3px;color:#393939;">Taiwan</div>
<div class="t" style="right:268.4000000000001px;top:476.0px;font-size:19.3px;color:#393939;">365</div>
<div class="t" style="right:150.29999999999995px;top:476.0px;font-size:19.3px;color:#393939;">5.6%</div>
<div class="t" style="right:86.70000000000005px;top:476.0px;font-size:19.3px;color:#2a5fb8;">349</div>
<div style="position:absolute;left:1359px;top:509.5px;width:6.1px;height:47px;background:#fff1e6;"></div>
<div style="position:absolute;left:1359px;top:509.5px;width:608px;height:1px;background:#f0f1f3;"></div>
<svg style="position:absolute;left:1370px;top:526.0px" width="20" height="14"><rect width="20" height="14" fill="#fff"/><g fill="#c9303a"><rect y="0" width="20" height="1.1"/><rect y="2.2" width="20" height="1.1"/><rect y="4.3" width="20" height="1.1"/><rect y="6.5" width="20" height="1.1"/><rect y="8.6" width="20" height="1.1"/><rect y="10.8" width="20" height="1.1"/><rect y="12.9" width="20" height="1.1"/></g><rect width="9" height="7.5" fill="#3a4a8a"/></svg>
<div class="t" style="left:1401px;top:523.0px;font-size:19.3px;color:#393939;">United States</div>
<div class="t" style="right:268.4000000000001px;top:523.0px;font-size:19.3px;color:#393939;">67</div>
<div class="t" style="left:1742px;top:525.5px;font-size:16px;color:#22985a;">+67</div>
<div class="t" style="right:150.29999999999995px;top:523.0px;font-size:19.3px;color:#393939;">1.0%</div>
<div class="t" style="right:86.70000000000005px;top:523.0px;font-size:19.3px;color:#2a5fb8;">85</div>
<div class="t" style="left:1924px;top:525.5px;font-size:16px;color:#22985a;">+69</div>
<div style="position:absolute;left:1359px;top:556.5px;width:4.9px;height:47px;background:#fff1e6;"></div>
<div style="position:absolute;left:1359px;top:556.5px;width:608px;height:1px;background:#f0f1f3;"></div>
<svg style="position:absolute;left:1370px;top:573.0px" width="20" height="14"><rect width="20" height="14" fill="#fff"/><g fill="#cc2a2f"><rect y="0" width="20" height="1"/><rect y="2" width="20" height="1"/><rect y="4" width="20" height="1"/><rect y="6" width="20" height="1"/><rect y="8" width="20" height="1"/><rect y="10" width="20" height="1"/><rect y="12" width="20" height="1"/></g><rect width="10" height="8" fill="#1b2a7a"/><circle cx="4.5" cy="4" r="2.3" fill="#f5c400"/><circle cx="5.3" cy="4" r="1.9" fill="#1b2a7a"/></svg>
<div class="t" style="left:1401px;top:570.0px;font-size:19.3px;color:#393939;">Malaysia</div>
<div class="t" style="right:268.4000000000001px;top:570.0px;font-size:19.3px;color:#393939;">50</div>
<div class="t" style="right:150.29999999999995px;top:570.0px;font-size:19.3px;color:#393939;">0.8%</div>
<div class="t" style="right:86.70000000000005px;top:570.0px;font-size:19.3px;color:#2a5fb8;">36</div>
<div style="position:absolute;left:1359px;top:603.5px;width:1.2px;height:47px;background:#fff1e6;"></div>
<div style="position:absolute;left:1359px;top:603.5px;width:608px;height:1px;background:#f0f1f3;"></div>
<svg style="position:absolute;left:1370px;top:620.0px" width="20" height="14"><rect width="20" height="14" fill="#fff"/><rect width="5" height="14" fill="#d01c2a"/><rect x="15" width="5" height="14" fill="#d01c2a"/><path d="M10 3 L11 5.5 L12.5 5 L12 8 L13.5 7.5 L10.5 10.5 L10.5 12 L9.5 12 L9.5 10.5 L6.5 7.5 L8 8 L7.5 5 L9 5.5Z" fill="#d01c2a"/></svg>
<div class="t" style="left:1401px;top:617.0px;font-size:19.3px;color:#393939;">Canada</div>
<div class="t" style="right:268.4000000000001px;top:617.0px;font-size:19.3px;color:#393939;">10</div>
<div class="t" style="left:1742px;top:619.5px;font-size:16px;color:#22985a;">+10</div>
<div class="t" style="right:150.29999999999995px;top:617.0px;font-size:19.3px;color:#393939;">0.2%</div>
<div class="t" style="right:86.70000000000005px;top:617.0px;font-size:19.3px;color:#2a5fb8;">21</div>
<div class="t" style="left:1924px;top:619.5px;font-size:16px;color:#22985a;">+18</div>
<div style="position:absolute;left:1359px;top:650.5px;width:608px;height:1.5px;background:#e6e8ea;"></div>
<svg style="position:absolute;left:1376px;top:677px" width="12" height="19"><path d="M10 2 L3 9.5 L10 17" fill="none" stroke="#b0b0b0" stroke-width="2.6"/></svg>
<svg style="position:absolute;left:1426px;top:677px" width="12" height="19"><path d="M2 2 L9.2 9.5 L2 17" fill="none" stroke="#333" stroke-width="2.7"/></svg>
<div class="t" style="left:1483px;top:677px;font-size:19.3px;color:#393939;">Compare top 5 on chart</div>
<div style="position:absolute;left:1337px;top:743px;width:652px;height:260px;background:#fff;box-shadow:0 1px 2px rgba(0,0,0,0.07),0 0 1px rgba(0,0,0,0.08);"></div>
<div class="t" style="left:1359px;top:768.3px;font-size:19px;color:#393939;font-weight:bold;">Organic keywords by intent</div>
<div style="position:absolute;left:1619.5px;top:767.5px;width:42px;height:19.3px;background:#d3e5f8;border-radius:4px;"></div>
<div class="t" style="left:1625px;top:767.7px;font-size:15px;color:#393939;">Beta</div>
<div style="position:absolute;left:1359px;top:811px;width:608px;height:1.5px;background:#e6e8ea;"></div>
<div class="t" style="left:1370px;top:827.2px;font-size:17.5px;color:#393939;font-weight:bold;">Intent</div>
<div class="t" style="left:1735px;top:827.2px;font-size:17.5px;color:#393939;font-weight:bold;">Keywords</div>
<div class="t" style="left:1851px;top:827.2px;font-size:17.5px;color:#393939;font-weight:bold;">Traffic</div>
<div style="position:absolute;left:1359px;top:858.5px;width:608px;height:1px;background:#eceef0;"></div>
<div style="position:absolute;left:1359px;top:881.3px;width:222px;height:46px;background:#fff1e6;"></div>
<div style="position:absolute;left:1359px;top:927px;width:386px;height:48px;background:#fff1e6;"></div>
<div style="position:absolute;left:1359px;top:927px;width:608px;height:1px;background:#f0f1f3;"></div>
<div class="t" style="left:1370px;top:894.4px;font-size:19.3px;color:#393939;">Branded</div>
<div class="t" style="right:225.5999999999999px;top:894.4px;font-size:19.3px;color:#2a5fb8;">543</div>
<div class="t" style="left:1786px;top:897px;font-size:16px;color:#22985a;">+532</div>
<div class="t" style="left:1851px;top:894.4px;font-size:19.3px;color:#393939;">2.8K</div>
<div class="t" style="left:1901px;top:897px;font-size:16px;color:#22985a;">+2.7K</div>
<div class="t" style="left:1370px;top:941.3px;font-size:19.3px;color:#393939;">Non-branded</div>
<div class="t" style="right:225.5999999999999px;top:941.3px;font-size:19.3px;color:#2a5fb8;">943</div>
<div class="t" style="left:1786px;top:944px;font-size:16px;color:#22985a;">+912</div>
<div class="t" style="left:1851px;top:941.3px;font-size:19.3px;color:#393939;">3.7K</div>
<div class="t" style="left:1901px;top:944px;font-size:16px;color:#22985a;">+3.7K</div>
<div style="position:absolute;left:1940px;top:956px;width:54px;height:54px;background:#303c57;border-radius:50%;"></div>
<div class="t" style="left:1967.5px;top:964.5px;font-size:33px;color:#fff;transform:translateX(-50%);-webkit-text-stroke:0.6px #fff;">?</div>
</div></body></html>
